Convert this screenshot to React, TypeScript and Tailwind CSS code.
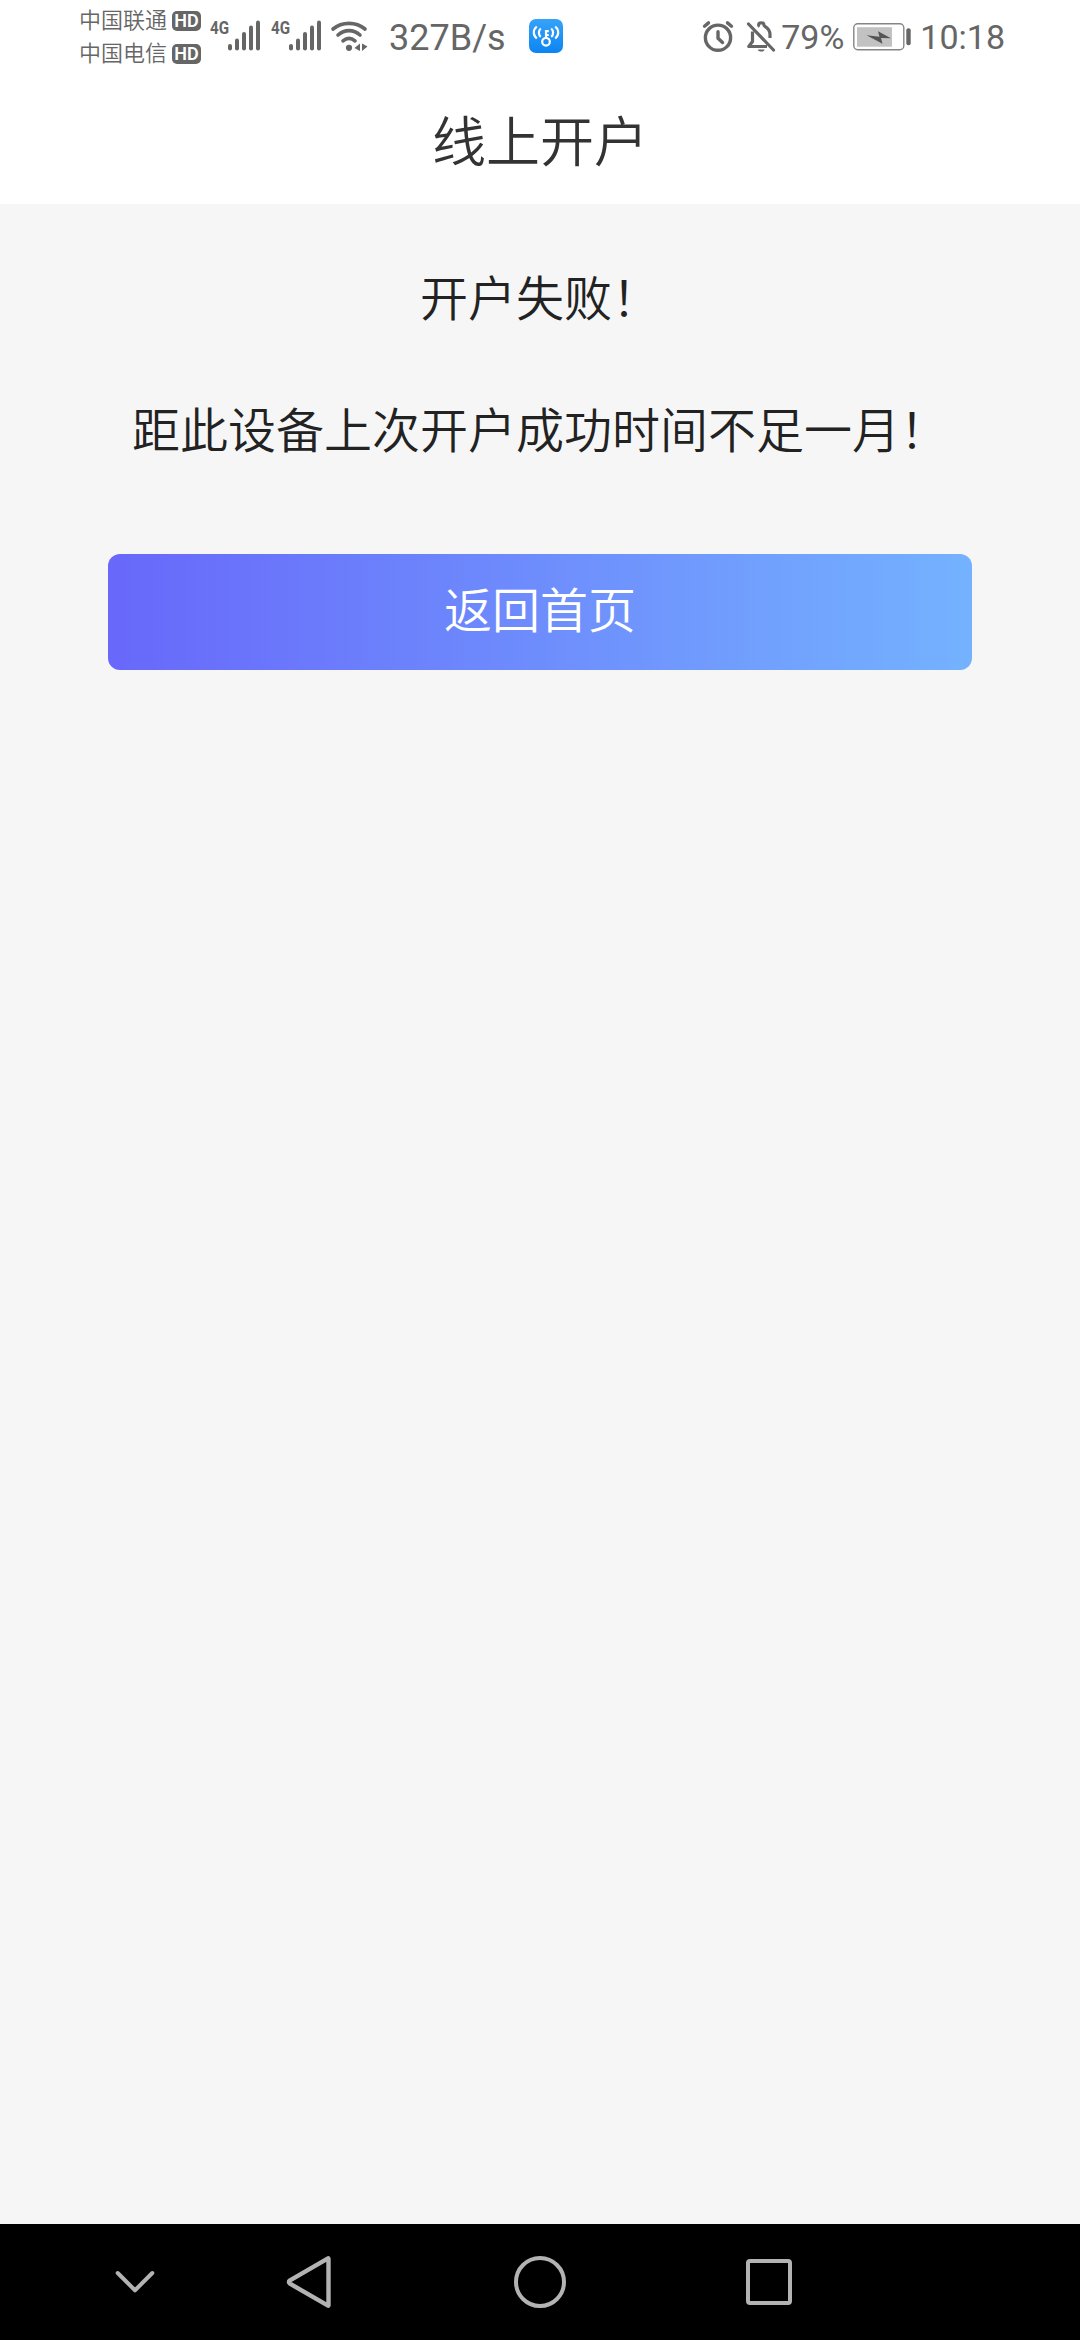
const CARRIERS = ["中国联通", "中国电信"];

const SIGNAL_BARS = [
  { x: 20, top: 27 },
  { x: 27, top: 21.5 },
  { x: 34, top: 15 },
  { x: 41, top: 8.5 },
  { x: 48, top: 3.5 },
];

function CellSignal() {
  return (
    <div className="relative h-[34px] w-[61px] shrink-0">
      <span className="absolute top-0 left-0 origin-left scale-x-[0.8] font-[Roboto] text-[19px] leading-[18px] font-bold">
        4G
      </span>
      <svg className="h-[34px] w-[61px]" viewBox="0 0 61 34" fill="none">
        {SIGNAL_BARS.map((bar) => (
          <line
            key={bar.x}
            x1={bar.x}
            x2={bar.x}
            y1={bar.top}
            y2={29.5}
            stroke="currentColor"
            strokeWidth={4}
            strokeLinecap="round"
          />
        ))}
      </svg>
    </div>
  );
}

function WifiIcon() {
  return (
    <svg
      className="h-[34px] w-[40px] shrink-0"
      viewBox="0 0 40 34"
      fill="none"
      stroke="currentColor"
      strokeWidth={3.6}
      strokeLinecap="round"
    >
      <path d="M4 10C13 2.5 27 2.5 36 10" />
      <path d="M9 16C15.5 10.2 24.5 10.2 31 16" />
      <path d="M14 21.8C17.8 18.6 22.2 18.6 26 21.8" />
      <circle cx="20" cy="28.8" r="3.1" fill="currentColor" stroke="none" />
      <path
        d="M31 24.5V32L25.5 29ZM33 24.5L38.5 27.5L33 32Z"
        fill="currentColor"
        stroke="none"
      />
    </svg>
  );
}

function WifiKeyIcon() {
  return (
    <svg
      className="ml-[24px] h-[34px] w-[34px] shrink-0"
      viewBox="0 0 34 34"
      fill="none"
      stroke="white"
      strokeWidth={2.2}
    >
      <defs>
        <linearGradient id="key-bg" x1="0" y1="0" x2="0" y2="1">
          <stop offset="0" stopColor="#36a3f9" />
          <stop offset="1" stopColor="#0c84f2" />
        </linearGradient>
      </defs>
      <rect width="34" height="34" rx="7" fill="url(#key-bg)" stroke="none" />
      <circle cx="17" cy="22.8" r="3.8" />
      <path d="M17 19V11M17 12.2H19.8M17 16H19.8" />
      <path d="M11.8 9.5C9.3 11.5 9.3 15.8 11.8 17.8M22.2 9.5C24.7 11.5 24.7 15.8 22.2 17.8" />
      <path d="M7.8 7.5C3.8 10.8 3.8 16.2 7.8 19.5M26.2 7.5C30.2 10.8 30.2 16.2 26.2 19.5" />
    </svg>
  );
}

function AlarmIcon() {
  return (
    <svg
      className="h-[34px] w-[32px] shrink-0"
      viewBox="0 0 32 34"
      fill="none"
      stroke="currentColor"
      strokeWidth={3.4}
      strokeLinecap="round"
      strokeLinejoin="round"
    >
      <circle cx="16" cy="18.7" r="12.6" />
      <path d="M16 12.7V19.2L20.5 23.5" />
      <path d="M2.5 7.2L6.5 3.9M29.5 7.2L25.5 3.9" />
    </svg>
  );
}

function BellOffIcon() {
  return (
    <svg
      className="ml-[12px] h-[34px] w-[30px] shrink-0"
      viewBox="0 0 30 34"
      fill="none"
      stroke="currentColor"
      strokeWidth={3.2}
    >
      <path d="M2.5 5L27.5 31" strokeLinecap="round" />
      <path d="M6.5 12.5V22.5L2.8 27.5H21" strokeLinejoin="round" />
      <path d="M11.5 7.2C12.5 6.8 12.8 6.5 12.8 5.5C12.8 3.3 17.8 3.3 17.8 5.5C17.8 6.5 18.2 6.8 19 7.3C22.5 9.5 24 12 24 15.5V19" />
      <path d="M11.8 30.5H18.6C18.2 33.3 12.2 33.3 11.8 30.5Z" fill="currentColor" stroke="none" />
    </svg>
  );
}

function BatteryIcon() {
  return (
    <svg className="ml-[9px] h-[34px] w-[60px] shrink-0" viewBox="0 0 60 34" fill="none">
      <rect x="0.8" y="4.8" width="50" height="26" rx="4" stroke="#858585" strokeWidth="1.4" />
      <rect x="4" y="8.2" width="35" height="19.5" fill="#c2c2c2" />
      <path d="M13.5 16.2L26.5 17.7L25 12.2L38 19.2L28 19L29.5 24.7Z" fill="#555" />
      <rect x="53.3" y="9.2" width="4.4" height="17" rx="2" fill="#666" />
    </svg>
  );
}

function StatusBar() {
  return (
    <div className="flex h-[72px] items-center pl-[79px] font-[Roboto] text-[#666]">
      <div className="flex w-[131px] shrink-0 flex-col pt-px">
        {CARRIERS.map((name) => (
          <div key={name} className="flex h-[33px] items-center gap-[5px]">
            <span className="-mt-[3px] font-['Noto_Sans_CJK_SC',sans-serif] text-[22px] leading-[33px] font-[350]">
              {name}
            </span>
            <span className="mt-px flex h-[20px] w-[29px] items-center justify-center rounded-[5px] bg-[#666] text-[18px] leading-none font-semibold text-white">
              HD
            </span>
          </div>
        ))}
      </div>
      <CellSignal />
      <CellSignal />
      <div className="-ml-[3px] flex items-center">
        <WifiIcon />
      </div>
      <span className="ml-[20px] w-[116px] shrink-0 pt-[3px] text-[36px] whitespace-nowrap">
        327B/s
      </span>
      <WifiKeyIcon />
      <div className="ml-auto flex items-center pr-[75px]">
        <AlarmIcon />
        <BellOffIcon />
        <span className="ml-[5px] pt-[2px] text-[34px]">79%</span>
        <BatteryIcon />
        <span className="ml-[7px] pt-[2px] text-[34px]">10:18</span>
      </div>
    </div>
  );
}

function NavBar() {
  return (
    <nav className="grid h-[116px] grid-cols-[270px_78px_384px_74px] items-center bg-black">
      <svg
        className="ml-[111px] h-[48px] w-[48px]"
        viewBox="0 0 48 48"
        fill="none"
        stroke="#b3b3b3"
        strokeWidth={4}
        strokeLinecap="round"
        strokeLinejoin="round"
      >
        <path d="M6.7 15L24 32.3L41.3 15" />
      </svg>
      <svg
        className="ml-[12px] h-[60px] w-[54px]"
        viewBox="0 0 54 60"
        fill="none"
        stroke="#b3b3b3"
        strokeWidth={4.4}
        strokeLinejoin="round"
      >
        <path d="M46 6.4L8 28.3Q5.8 30 8 31.7L46 53.6Q46.5 53.9 46.5 53V7Q46.5 6.1 46 6.4Z" />
      </svg>
      <div className="h-[52px] w-[52px] justify-self-center rounded-full border-[4.5px] border-[#b3b3b3]" />
      <div className="ml-[14px] h-[46px] w-[46px] rounded-[4px] border-[4px] border-[#b3b3b3]" />
    </nav>
  );
}

export default function App() {
  return (
    <div className="flex h-[2340px] w-[1080px] flex-col overflow-hidden bg-[#f6f6f6] font-['Noto_Sans_CJK_SC',sans-serif]">
      <header className="h-[204px] bg-white">
        <StatusBar />
        <h1 className="pt-px text-center text-[54px] leading-[132px] font-[350] text-[#333]">
          线上开户
        </h1>
      </header>

      <main className="flex-1 px-[108px] pt-[25px] text-center text-[48px] font-[350] text-[#222]">
        <p className="leading-[132px]">开户失败！</p>
        <p className="leading-[132px]">距此设备上次开户成功时间不足一月！</p>
        <button className="mt-[61px] block h-[116px] w-full rounded-[12px] bg-linear-to-r/srgb from-[#6868fa] to-[#74b2ff] pb-[10px] text-white">
          返回首页
        </button>
      </main>

      <NavBar />
    </div>
  );
}
